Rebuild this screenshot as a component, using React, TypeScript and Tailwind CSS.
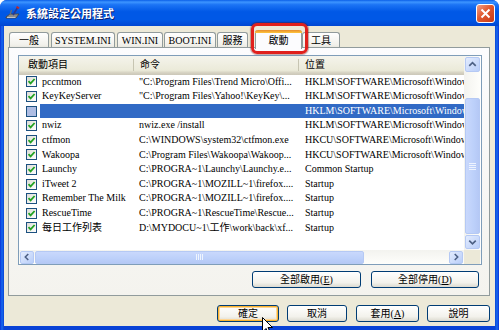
import React from "react";

const FONT = "font-['Liberation_Serif','Noto_Sans_CJK_TC',serif]";

type Row = { name: string; cmd: string; loc: string; checked: boolean; selected?: boolean };
const HKLM = "HKLM\\SOFTWARE\\Microsoft\\Windows\\CurrentVersion\\Run";
const HKCU = "HKCU\\SOFTWARE\\Microsoft\\Windows\\CurrentVersion\\Run";
const rows: Row[] = [
  { name: "pccntmon", cmd: "\"C:\\Program Files\\Trend Micro\\Offi...", loc: HKLM, checked: true },
  { name: "KeyKeyServer", cmd: "\"C:\\Program Files\\Yahoo!\\KeyKey\\...", loc: HKLM, checked: true },
  { name: "", cmd: "", loc: HKLM, checked: false, selected: true },
  { name: "nwiz", cmd: "nwiz.exe /install", loc: HKLM, checked: true },
  { name: "ctfmon", cmd: "C:\\WINDOWS\\system32\\ctfmon.exe", loc: HKCU, checked: true },
  { name: "Wakoopa", cmd: "C:\\Program Files\\Wakoopa\\Wakoop...", loc: HKCU, checked: true },
  { name: "Launchy", cmd: "C:\\PROGRA~1\\Launchy\\Launchy.e...", loc: "Common Startup", checked: true },
  { name: "iTweet 2", cmd: "C:\\PROGRA~1\\MOZILL~1\\firefox....", loc: "Startup", checked: true },
  { name: "Remember The Milk", cmd: "C:\\PROGRA~1\\MOZILL~1\\firefox....", loc: "Startup", checked: true },
  { name: "RescueTime", cmd: "C:\\PROGRA~1\\RescueTime\\Rescue...", loc: "Startup", checked: true },
  { name: "每日工作列表", cmd: "D:\\MYDOCU~1\\工作\\work\\back\\xf...", loc: "Startup", checked: true },
];

function Checkbox({ checked, selected }: { checked: boolean; selected?: boolean }) {
  return (
    <div
      className={
        "w-[11px] h-[11px] border border-[#1C5180] flex items-center justify-center shrink-0 " +
        (selected ? "bg-[#AEBDE3]" : "bg-[linear-gradient(135deg,#DCDCD7,#FFFFFF)]")
      }
    >
      {checked && (
        <svg width="9" height="9" viewBox="0 0 9 9">
          <path d="M1.5 4.2 L3.6 6.4 L7.6 2" stroke="#21A121" strokeWidth="1.8" fill="none" />
        </svg>
      )}
    </div>
  );
}

function ArrowBtn({ dir, className }: { dir: "up" | "down" | "left" | "right"; className?: string }) {
  const paths: Record<string, string> = {
    up: "M3.5 8 L7 4.5 L10.5 8",
    down: "M3.5 5.5 L7 9 L10.5 5.5",
    left: "M8.5 3.5 L5 7 L8.5 10.5",
    right: "M5.5 3.5 L9 7 L5.5 10.5",
  };
  return (
    <div
      className={
        "rounded-[2px] border border-[#B5C9F4] bg-[linear-gradient(135deg,#E3ECFE,#B9CEF9)] flex items-center justify-center shrink-0 " +
        (className || "")
      }
    >
      <svg width="14" height="14" viewBox="0 0 14 14">
        <path d={paths[dir]} stroke="#4D6185" strokeWidth="1.8" fill="none" />
      </svg>
    </div>
  );
}

function XPButton({ children, w, focused }: { children: React.ReactNode; w: string; focused?: boolean }) {
  return (
    <div
      className={
        "h-[17px] rounded-[3px] border border-[#003C74] flex items-center justify-center text-[10px] text-black bg-[linear-gradient(180deg,#FFFFFF,#F3F2EC_70%,#DCDAD0)] " +
        w +
        (focused ? " shadow-[inset_0_0_0_1px_#F8B330,inset_0_0_0_2px_#FFD695]" : "")
      }
    >
      {children}
    </div>
  );
}

function Tab({ label, w, selected, ml }: { label: string; w: string; selected?: boolean; ml?: string }) {
  if (selected) {
    return (
      <div
        className={
          "relative z-10 h-[19px] -mb-[1px] border-x border-[#919B9C] bg-[#FCFCFE] rounded-t-[3px] flex flex-col " +
          w +
          " " +
          (ml || "")
        }
      >
        <div className="h-[3px] rounded-t-[3px] bg-[linear-gradient(180deg,#E68B2C,#FFC73C)] -mx-[1px]" />
        <div className="flex-1 flex items-center justify-center text-[10px] leading-none">{label}</div>
      </div>
    );
  }
  return (
    <div
      className={
        "h-[16px] border-t border-x border-[#919B9C] rounded-t-[3px] bg-[linear-gradient(180deg,#FFFFFF,#F1F0EA_80%,#E6E4DB)] flex items-center justify-center text-[10px] leading-none " +
        w +
        " " +
        (ml || "")
      }
    >
      {label}
    </div>
  );
}

export default function App() {
  return (
    <div className={"w-[499px] h-[330px] bg-white relative overflow-hidden " + FONT}>
      <div className="w-full h-full flex flex-col rounded-t-[7px] overflow-hidden bg-[linear-gradient(90deg,#0831D9,#166AEE_2px,#0842D6_4px,#0842D6_495px,#166AEE,#0831D9)]">
        {/* Title bar */}
        <div className="h-[26px] shrink-0 flex items-center pl-[5px] pr-[4px] bg-[linear-gradient(180deg,#0A5FE8_0%,#3D95FF_8%,#1C74F5_18%,#0058E6_45%,#0058E6_75%,#0046D2_100%)]">
          <svg width="16" height="16" viewBox="0 0 16 16" className="shrink-0">
            <path d="M1 12 L5 9 L14 9 L11 13 L1 13 Z" fill="#8C8C8C" stroke="#404040" strokeWidth="0.8" />
            <path d="M2 12.5 L10.5 12.5" stroke="#D8D8D8" strokeWidth="0.8" />
            <path d="M8 10 L13 2" stroke="#2A3A90" strokeWidth="1.6" />
            <path d="M12 1 L14.5 2.5 L13.4 4 L11 2.6 Z" fill="#C62828" />
            <path d="M5 10 L6.5 5" stroke="#707070" strokeWidth="1.2" />
          </svg>
          <div className="ml-[5px] text-white font-bold text-[11px] font-['Noto_Sans_CJK_TC',sans-serif] [text-shadow:1px_1px_0_#0A1E6E] tracking-[0px] leading-none">
            系統設定公用程式
          </div>
          <div className="ml-auto w-[19px] h-[19px] rounded-[3px] border border-white bg-[linear-gradient(135deg,#F0A08A,#E0592F_45%,#C83A17)] flex items-center justify-center">
            <svg width="11" height="11" viewBox="0 0 11 11">
              <path d="M1.5 1.5 L9.5 9.5 M9.5 1.5 L1.5 9.5" stroke="white" strokeWidth="2" />
            </svg>
          </div>
        </div>

        {/* Body */}
        <div className="flex-1 mx-[4px] mb-[4px] bg-[#ECE9D8] flex flex-col">
          {/* Tabs */}
          <div className="mt-[4px] pl-[5px] h-[18px] flex items-end shrink-0">
            <Tab label="一般" w="w-[40px]" />
            <Tab label="SYSTEM.INI" w="w-[64px]" ml="ml-[2px]" />
            <Tab label="WIN.INI" w="w-[46px]" ml="ml-[2px]" />
            <Tab label="BOOT.INI" w="w-[52px]" ml="ml-[1px]" />
            <Tab label="服務" w="w-[31px]" ml="ml-[1px]" />
            <Tab label="啟動" w="w-[47px]" ml="ml-[7px]" selected />
            <Tab label="工具" w="w-[38px]" />
          </div>

          {/* Panel */}
          <div className="-mt-[1px] ml-[4px] mr-[5px] h-[249px] border border-[#919B9C] bg-[linear-gradient(180deg,#FCFCFE,#F4F3EE)] flex flex-col">
            {/* List box */}
            <div className="mt-[7px] ml-[9px] w-[464px] h-[210px] border border-[#7F9DB9] bg-white flex flex-col">
              <div className="h-[194px] flex">
                {/* content */}
                <div className="w-[445px] overflow-hidden">
                  {/* header */}
                  <div className="h-[18.6px] flex bg-[linear-gradient(180deg,#F5F4EC,#EBEAD9_75%,#D6D2C2_88%,#CBC7B8)] text-[10px] leading-none">
                    <div className="w-[116px] flex items-center pl-[9px] relative">
                      啟動項目
                      <div className="absolute right-[1px] top-[3px] h-[12px] w-[1px] bg-[#C7C5B2]" />
                    </div>
                    <div className="w-[165px] flex items-center pl-[5px] relative">
                      命令
                      <div className="absolute right-[1px] top-[3px] h-[12px] w-[1px] bg-[#C7C5B2]" />
                    </div>
                    <div className="flex-1 flex items-center pl-[5px]">位置</div>
                  </div>
                  {rows.map((r, i) => (
                    <div key={i} className="h-[14.6px] flex items-center text-[10px] leading-[14.6px] whitespace-nowrap">
                      <div className="w-[7px] shrink-0" />
                      <Checkbox checked={r.checked} selected={r.selected} />
                      <div className="w-[3px] shrink-0" />
                      <div className={"flex-1 h-full flex " + (r.selected ? "bg-[#316AC5] text-white" : "text-black")}>
                        <div className="w-[95px] shrink-0 pl-[2px] overflow-hidden">{r.name}</div>
                        <div className="w-[165px] shrink-0 pl-[4px] overflow-hidden">{r.cmd}</div>
                        <div className="w-[300px] shrink-0 pl-[5px]">{r.loc}</div>
                      </div>
                    </div>
                  ))}
                </div>
                {/* vertical scrollbar */}
                <div className="w-[16px] flex flex-col bg-[linear-gradient(90deg,#F3F3EF,#FEFEFB)] pt-[1px]">
                  <ArrowBtn dir="up" className="w-[15px] h-[15px] ml-[1px]" />
                  <div className="h-[26px]" />
                  <div className="w-[15px] h-[136px] ml-[1px] rounded-[2px] border border-[#B5C9F4] bg-[linear-gradient(90deg,#C9D8FC,#BCD0FA_60%,#B5C8F5)] flex items-center justify-center">
                    <div className="flex flex-col gap-[1px]">
                      <div className="w-[7px] h-[1px] bg-[#EEF4FE]" />
                      <div className="w-[7px] h-[1px] bg-[#EEF4FE]" />
                      <div className="w-[7px] h-[1px] bg-[#EEF4FE]" />
                      <div className="w-[7px] h-[1px] bg-[#EEF4FE]" />
                    </div>
                  </div>
                  <div className="flex-1" />
                  <ArrowBtn dir="down" className="w-[15px] h-[14px] ml-[1px] mb-[1px]" />
                </div>
              </div>
              {/* horizontal scrollbar */}
              <div className="h-[14px] flex bg-[linear-gradient(180deg,#F3F3EF,#FEFEFB)]">
                <div className="w-[445px] flex items-center pl-[1px]">
                  <ArrowBtn dir="left" className="w-[14px] h-[13px]" />
                  <div className="ml-[1px] w-[329px] h-[13px] rounded-[2px] border border-[#B5C9F4] bg-[linear-gradient(180deg,#C9D8FC,#BCD0FA_60%,#B5C8F5)] flex items-center justify-center">
                    <div className="flex gap-[1px]">
                      <div className="w-[1px] h-[6px] bg-[#EEF4FE]" />
                      <div className="w-[1px] h-[6px] bg-[#EEF4FE]" />
                      <div className="w-[1px] h-[6px] bg-[#EEF4FE]" />
                      <div className="w-[1px] h-[6px] bg-[#EEF4FE]" />
                    </div>
                  </div>
                  <div className="flex-1" />
                  <ArrowBtn dir="right" className="w-[14px] h-[13px] mr-[1px]" />
                </div>
                <div className="w-[16px] bg-[#ECE9D8]" />
              </div>
            </div>

            {/* enable/disable buttons */}
            <div className="mt-[6px] flex justify-end gap-[10px] pr-[10px]">
              <XPButton w="w-[109px]">
                全部啟用(<span className="underline">E</span>)
              </XPButton>
              <XPButton w="w-[108px]">
                全部停用(<span className="underline">D</span>)
              </XPButton>
            </div>
          </div>

          {/* Bottom buttons */}
          <div className="mt-[9px] flex justify-end pr-[5px]">
            <XPButton w="w-[62px]" focused>
              確定
            </XPButton>
            <div className="w-[8px]" />
            <XPButton w="w-[60px]">取消</XPButton>
            <div className="w-[9px]" />
            <XPButton w="w-[63px]">
              套用(<span className="underline">A</span>)
            </XPButton>
            <div className="w-[8px]" />
            <XPButton w="w-[63px]">說明</XPButton>
          </div>
        </div>
      </div>

      {/* Red highlight around the 啟動 tab */}
      <div className="absolute left-[251px] top-[23px] w-[57px] h-[31px] rounded-[6px] border-[3px] border-[#E0201C] shadow-[0_0_1px_1px_rgba(90,0,0,0.35)] pointer-events-none" />

      {/* Mouse cursor */}
      <svg className="absolute left-[262px] top-[317px]" width="12" height="18" viewBox="0 0 12 18">
        <path d="M0.5 0.5 L0.5 15 L4 11.5 L6.5 17 L8.5 16 L6 10.5 L10.5 10.5 Z" fill="white" stroke="black" strokeWidth="1" />
      </svg>
    </div>
  );
}
